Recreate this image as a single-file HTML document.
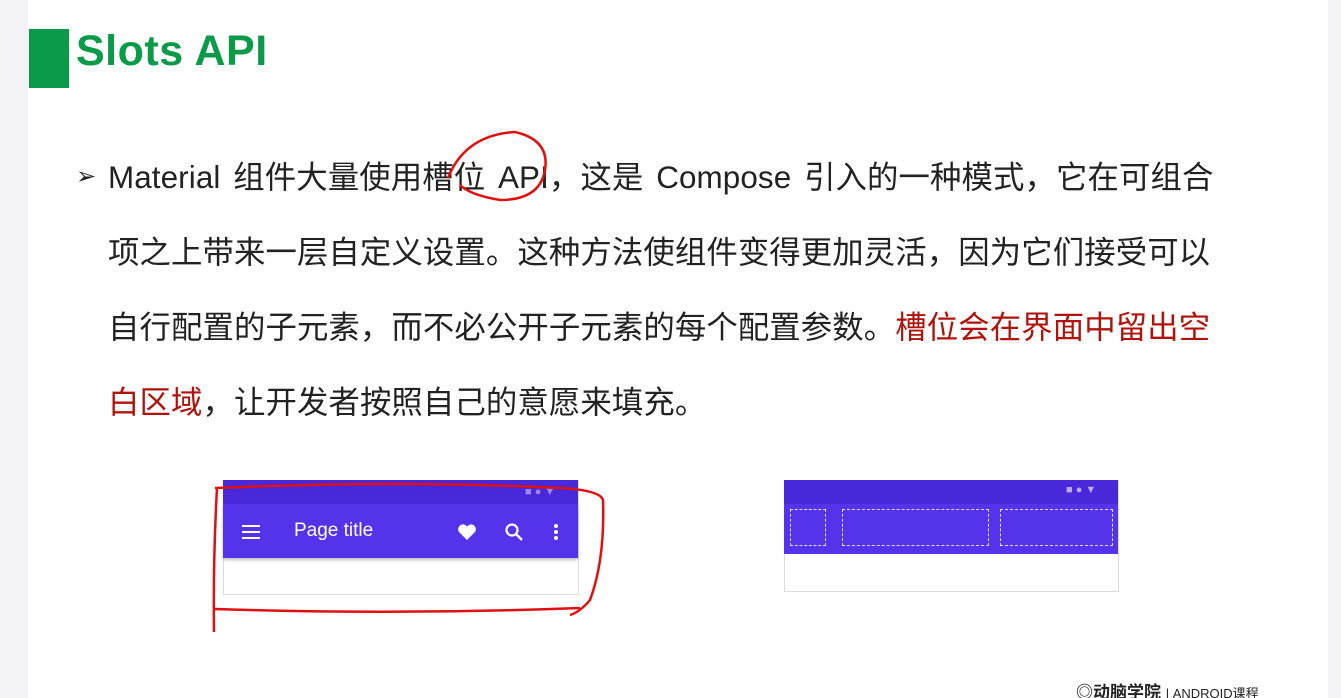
<!DOCTYPE html>
<html style="overflow:hidden"><head><meta charset="utf-8"><style>
html,body{margin:0;width:1341px;height:698px;overflow:hidden}
body{background:#f3f3f5;position:relative;font-family:"Liberation Sans","Noto Sans CJK SC",sans-serif}
.slide{position:absolute;left:28px;top:0;width:1300px;height:698px;background:#fff}
.bar{position:absolute;left:29px;top:29px;width:40px;height:59px;background:#0a9a48}
.title{position:absolute;left:76px;top:24px;font-size:43px;font-weight:bold;color:#0a9a48;line-height:54px;letter-spacing:0.5px}
.line{position:absolute;left:108px;font-size:31.4px;letter-spacing:0.1px;word-spacing:4px;color:#222;white-space:nowrap;line-height:40px}
.red{color:#b0120c}
.bul{position:absolute;left:76px;top:162px;font-size:24px;color:#222}
.ab{position:absolute;background:#5433ea}
.sb{position:absolute;background:#4828d8}
</style></head><body>
<div class="slide"></div>
<div class="bar"></div>
<div class="title">Slots API</div>
<div class="bul">➢</div>
<div class="line" style="top:158px">Material 组件大量使用槽位 API，这是 Compose 引入的一种模式，它在可组合</div>
<div class="line" style="top:233px">项之上带来一层自定义设置。这种方法使组件变得更加灵活，因为它们接受可以</div>
<div class="line" style="top:308px">自行配置的子元素，而不必公开子元素的每个配置参数。<span class="red">槽位会在界面中留出空</span></div>
<div class="line" style="top:383px"><span class="red">白区域</span>，让开发者按照自己的意愿来填充。</div>

<div style="position:absolute;left:223px;top:480px;width:354px;height:113px;border:1px solid #ddd;background:#fff"></div>
<div class="sb" style="left:223px;top:480px;width:355px;height:24px"></div>
<div class="ab" style="left:223px;top:504px;width:355px;height:54px;box-shadow:0 2px 3px rgba(0,0,0,.25)"></div>
<div style="position:absolute;left:242px;top:525px;width:18px;height:2px;background:#fff;box-shadow:0 6px 0 #fff,0 12px 0 #fff"></div>
<div style="position:absolute;left:294px;top:520px;font-size:19px;color:#fff">Page title</div>
<svg style="position:absolute;left:457px;top:523px" width="20" height="18"><path d="M10 17 L2 9 A4.5 4.5 0 0 1 10 3.5 A4.5 4.5 0 0 1 18 9 Z" fill="#fff"/></svg>
<svg style="position:absolute;left:504px;top:522px" width="20" height="20"><circle cx="8" cy="8" r="5.5" stroke="#fff" stroke-width="2.2" fill="none"/><line x1="12" y1="12" x2="18" y2="18" stroke="#fff" stroke-width="2.4"/></svg>
<div style="position:absolute;left:554px;top:524px;width:4px;height:4px;border-radius:2px;background:#fff;box-shadow:0 6px 0 #fff,0 12px 0 #fff"></div>
<div style="position:absolute;left:525px;top:486px;font-size:11px;color:#9a88f0">■ ● ▼</div>

<div style="position:absolute;left:784px;top:480px;width:333px;height:110px;border:1px solid #ddd;background:#fff"></div>
<div class="sb" style="left:784px;top:480px;width:334px;height:24px"></div>
<div class="ab" style="left:784px;top:504px;width:334px;height:50px"></div>
<div style="position:absolute;left:1066px;top:484px;font-size:11px;color:#b8aaf5">■ ● ▼</div>
<div style="position:absolute;left:790px;top:509px;width:34px;height:35px;border:1px dashed #ddd"></div>
<div style="position:absolute;left:842px;top:509px;width:145px;height:35px;border:1px dashed #ddd"></div>
<div style="position:absolute;left:1000px;top:509px;width:111px;height:35px;border:1px dashed #ddd"></div>

<svg style="position:absolute;left:0;top:0" width="1341" height="698" fill="none" stroke="#e01010" stroke-width="2.5">
<path d="M215 488 Q400 480 560 488 Q600 490 603 500 Q605 560 590 600 Q580 612 570 615"/>
<path d="M217 488 Q213 560 214 632"/>
<path d="M215 609 Q400 615 580 608"/>
<path d="M448 178 Q465 135 515 132 Q550 140 545 170 Q540 200 500 200 Q470 195 460 185"/>
</svg>
<div style="position:absolute;left:1076px;top:683px;font-size:17px;font-weight:bold;color:#222;white-space:nowrap;line-height:20px">◎动脑学院 <span style="font-weight:normal;font-size:13px">| ANDROID课程</span></div>
</body></html>
